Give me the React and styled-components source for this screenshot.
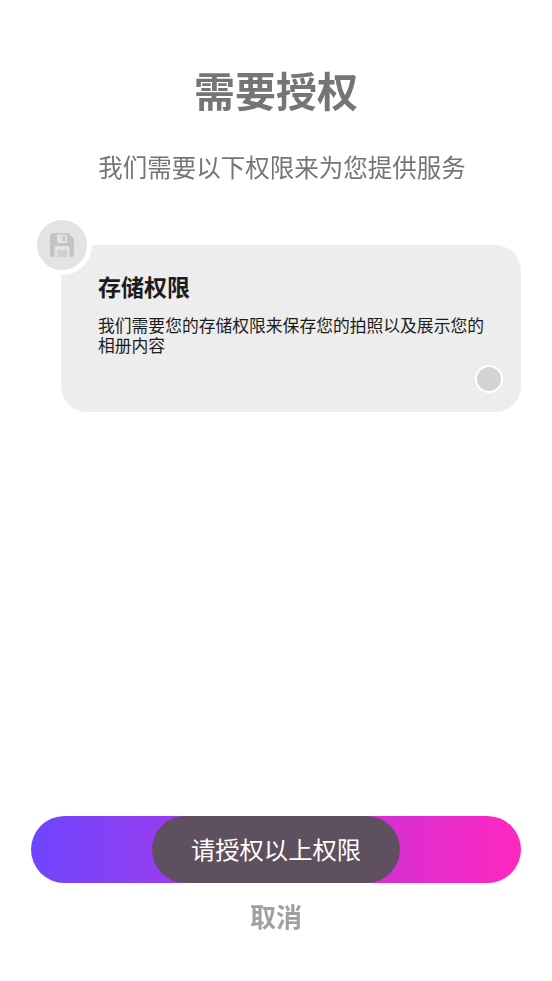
import React from 'react'
import styled, { createGlobalStyle } from 'styled-components'

const GlobalStyle = createGlobalStyle`
  html, body {
    margin: 0;
    padding: 0;
    background: #fff;
  }
  body {
    font-family: "Noto Sans CJK SC", "Liberation Sans", sans-serif;
  }
`

const Page = styled.div`
  width: 552px;
  height: 981px;
  display: flex;
  flex-direction: column;
  align-items: center;
  overflow: hidden;
  opacity: 0.999;
`

const Title = styled.h1`
  margin: 59px 0 0;
  font-size: 41px;
  line-height: 60px;
  font-weight: 700;
  color: #757575;
`

const Subtitle = styled.p`
  margin: 30px 0 0;
  padding-left: 12px;
  font-size: 24.5px;
  line-height: 36px;
  font-weight: 400;
  color: #757575;
`

const Card = styled.div`
  position: relative;
  box-sizing: border-box;
  align-self: flex-start;
  margin: 60px 0 0 61px;
  width: 460px;
  height: 167px;
  padding: 24px 32px 0 37px;
  background: #ededed;
  border-radius: 26px;
`

const Badge = styled.div`
  position: absolute;
  left: -29px;
  top: -30px;
  width: 50px;
  height: 50px;
  display: flex;
  align-items: center;
  justify-content: center;
  border-radius: 50%;
  background: #e3e3e3;
  border: 5px solid #fff;
`

const CardTitle = styled.h2`
  margin: 0;
  font-size: 23px;
  line-height: 34px;
  font-weight: 700;
  color: #1c1c1c;
`

const CardText = styled.p`
  margin: 12px 0 0;
  font-size: 16.8px;
  line-height: 20px;
  font-weight: 400;
  color: #1c1c1c;
`

const Radio = styled.span`
  position: absolute;
  right: 18px;
  bottom: 19px;
  box-sizing: border-box;
  width: 28px;
  height: 28px;
  border-radius: 50%;
  background: #d4d4d4;
  border: 2px solid #fff;
`

const Footer = styled.div`
  position: relative;
  margin-top: auto;
  width: 490px;
  margin-bottom: 46px;
  display: flex;
  flex-direction: column;
  align-items: center;
`

const GradientButton = styled.button`
  width: 100%;
  height: 67px;
  border: 0;
  padding: 0;
  border-radius: 34px;
  background: linear-gradient(90deg, #6f45ff 0%, #ff27c0 100%);
`

const Toast = styled.div`
  position: absolute;
  left: 121px;
  top: 0;
  box-sizing: border-box;
  width: 248px;
  height: 67px;
  padding-bottom: 2px;
  display: flex;
  align-items: center;
  justify-content: center;
  border-radius: 34px;
  background: #5f5060;
  color: #fff;
  font-size: 24.3px;
`

const Cancel = styled.div`
  margin-top: 14px;
  font-size: 26px;
  line-height: 38px;
  font-weight: 700;
  color: #a0a0a0;
`

const SaveIcon = () => (
  <svg width="24" height="24" viewBox="0 0 24 24">
    <path
      fill="#c4c4c4"
      fillRule="evenodd"
      d="M3 0h15l6 6v15a3 3 0 0 1-3 3H3a3 3 0 0 1-3-3V3a3 3 0 0 1 3-3zM7 1.500v7a1.500 1.500 0 0 0 1.500 1.500h7a1.500 1.500 0 0 0 1.500-1.500v-7zM12.500 3h2.500v5h-2.500zM4.500 15v9h15v-9a2 2 0 0 0-2-2h-11a2 2 0 0 0-2 2z"
    />
    <rect x="7" y="17" width="10" height="7" fill="#d0d0d0" />
  </svg>
)

const App = () => {
  return (
    <Page>
      <GlobalStyle />
      <Title>需要授权</Title>
      <Subtitle>我们需要以下权限来为您提供服务</Subtitle>
      <Card>
        <Badge>
          <SaveIcon />
        </Badge>
        <CardTitle>存储权限</CardTitle>
        <CardText>我们需要您的存储权限来保存您的拍照以及展示您的相册内容</CardText>
        <Radio />
      </Card>
      <Footer>
        <GradientButton />
        <Toast>请授权以上权限</Toast>
        <Cancel>取消</Cancel>
      </Footer>
    </Page>
  )
}

export default App
